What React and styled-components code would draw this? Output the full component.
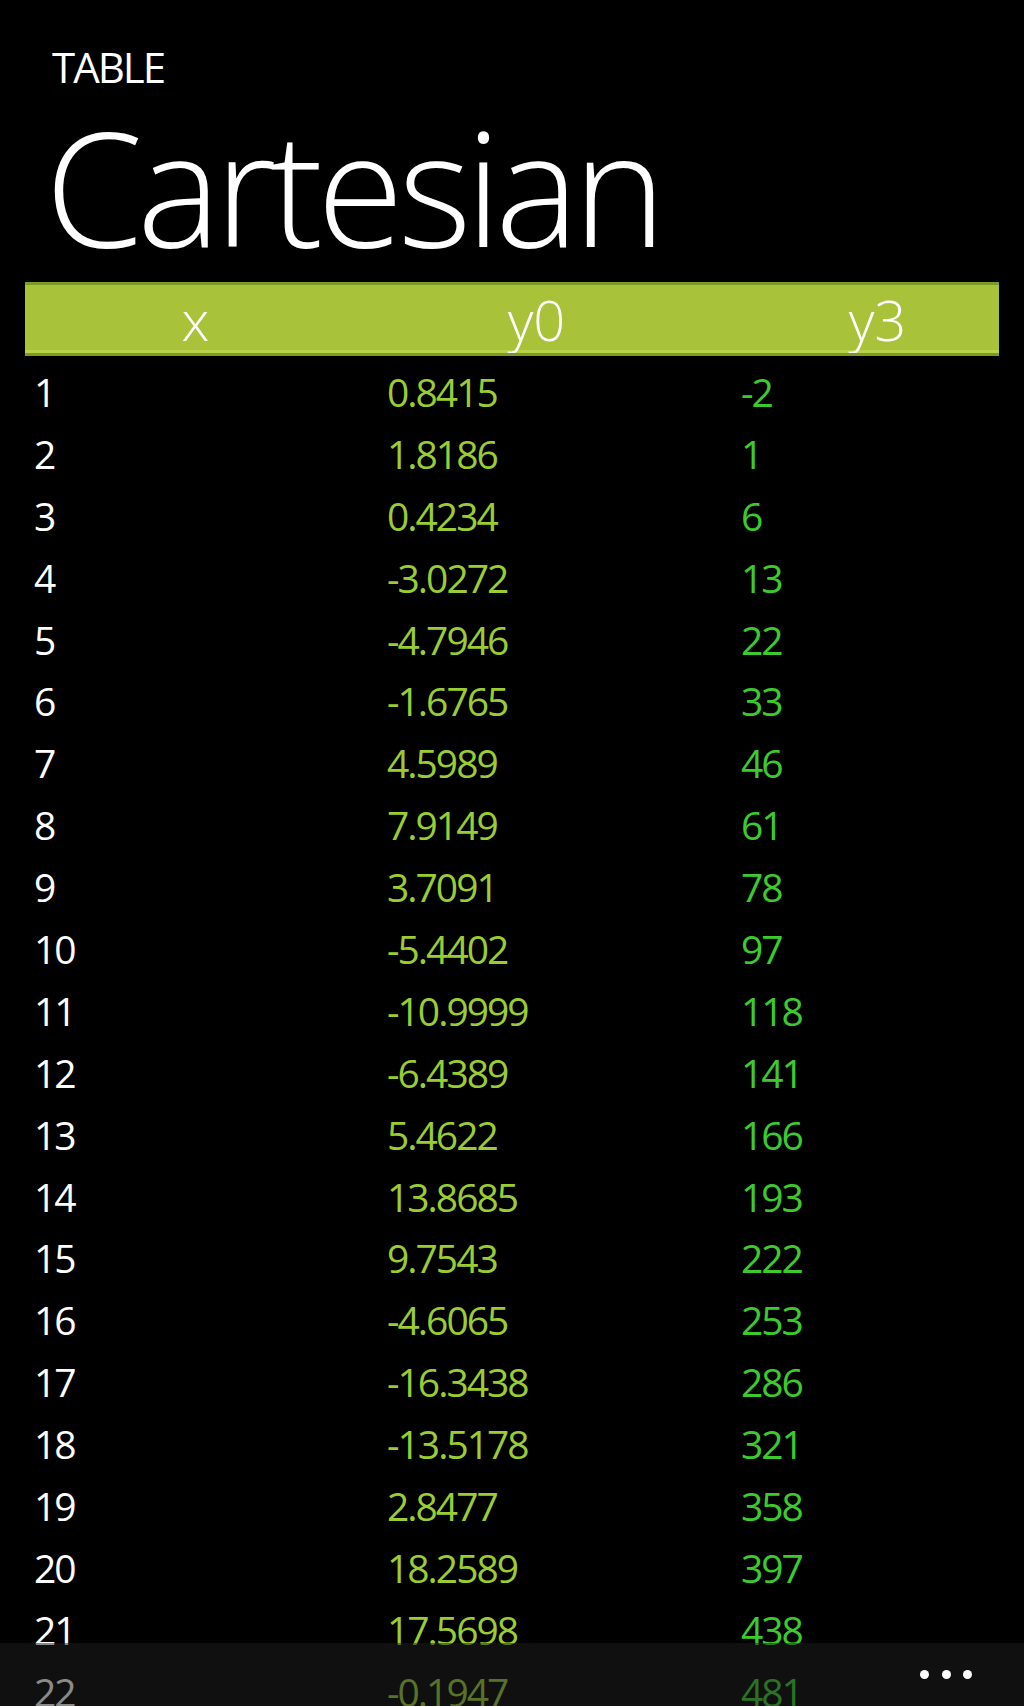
import React from "react";
import styled, { createGlobalStyle } from "styled-components";

const Global = createGlobalStyle`
  html, body {
    margin: 0;
    padding: 0;
    background: #000;
    overflow: hidden;
  }
  body {
    font-family: "Open Sans", "Liberation Sans", sans-serif;
    color: #fff;
  }
`;

const Page = styled.div`
  width: 1024px;
  height: 1706px;
  background: #000;
  overflow: hidden;
  position: relative;
`;

const TitlePanel = styled.header`
  padding: 46px 0 0 52px;
`;

const AppTitle = styled.div`
  font-size: 42px;
  line-height: 42px;
  font-weight: 400;
  letter-spacing: -2px;
  color: #fff;
`;

const PageTitle = styled.h1`
  margin: 19px 0 0 -7px;
  font-size: 158px;
  line-height: 158px;
  font-weight: 300;
  letter-spacing: -6px;
  color: #fff;
`;

const HeaderBar = styled.div`
  margin: 17px 25px 0 25px;
  height: 68px;
  background: #a8c23a;
  border-top: 3px solid #7f9a22;
  border-bottom: 3px solid #7f9a22;
  box-shadow: inset 0 -3px 0 #b8d24a;
  display: grid;
  grid-template-columns: repeat(3, 341px);
  overflow: hidden;
`;

const HeaderCell = styled.div`
  font-size: 56px;
  line-height: 68px;
  font-weight: 300;
  color: #fff;
  text-align: center;
`;

const Rows = styled.div`
  padding: 5px 0 0 34px;
`;

const Row = styled.div`
  display: grid;
  grid-template-columns: 353px 354px 1fr;
  height: 61.9px;
  font-size: 39px;
  line-height: 61.9px;
  letter-spacing: -2px;
`;

const Cell = styled.div`
  color: ${(p) => p.$color};
  white-space: nowrap;
`;

const AppBar = styled.footer`
  position: absolute;
  left: 0;
  right: 0;
  bottom: 0;
  height: 63px;
  background: rgba(31, 31, 31, 0.52);
  display: flex;
  justify-content: flex-end;
  align-items: center;
  gap: 12.5px;
  padding-right: 52px;
`;

const Dot = styled.span`
  width: 9px;
  height: 9px;
  border-radius: 50%;
  background: #fff;
`;

const data = [
  [1, "0.8415", -2],
  [2, "1.8186", 1],
  [3, "0.4234", 6],
  [4, "-3.0272", 13],
  [5, "-4.7946", 22],
  [6, "-1.6765", 33],
  [7, "4.5989", 46],
  [8, "7.9149", 61],
  [9, "3.7091", 78],
  [10, "-5.4402", 97],
  [11, "-10.9999", 118],
  [12, "-6.4389", 141],
  [13, "5.4622", 166],
  [14, "13.8685", 193],
  [15, "9.7543", 222],
  [16, "-4.6065", 253],
  [17, "-16.3438", 286],
  [18, "-13.5178", 321],
  [19, "2.8477", 358],
  [20, "18.2589", 397],
  [21, "17.5698", 438],
  [22, "-0.1947", 481],
];

export default function App() {
  return (
    <Page>
      <Global />
      <TitlePanel>
        <AppTitle>TABLE</AppTitle>
        <PageTitle>Cartesian</PageTitle>
      </TitlePanel>
      <HeaderBar>
        <HeaderCell>x</HeaderCell>
        <HeaderCell>y0</HeaderCell>
        <HeaderCell>y3</HeaderCell>
      </HeaderBar>
      <Rows>
        {data.map(([x, y0, y3]) => (
          <Row key={x}>
            <Cell $color="#ffffff">{x}</Cell>
            <Cell $color="#9acd32">{y0}</Cell>
            <Cell $color="#3ccb2c">{y3}</Cell>
          </Row>
        ))}
      </Rows>
      <AppBar>
        <Dot />
        <Dot />
        <Dot />
      </AppBar>
    </Page>
  );
}
